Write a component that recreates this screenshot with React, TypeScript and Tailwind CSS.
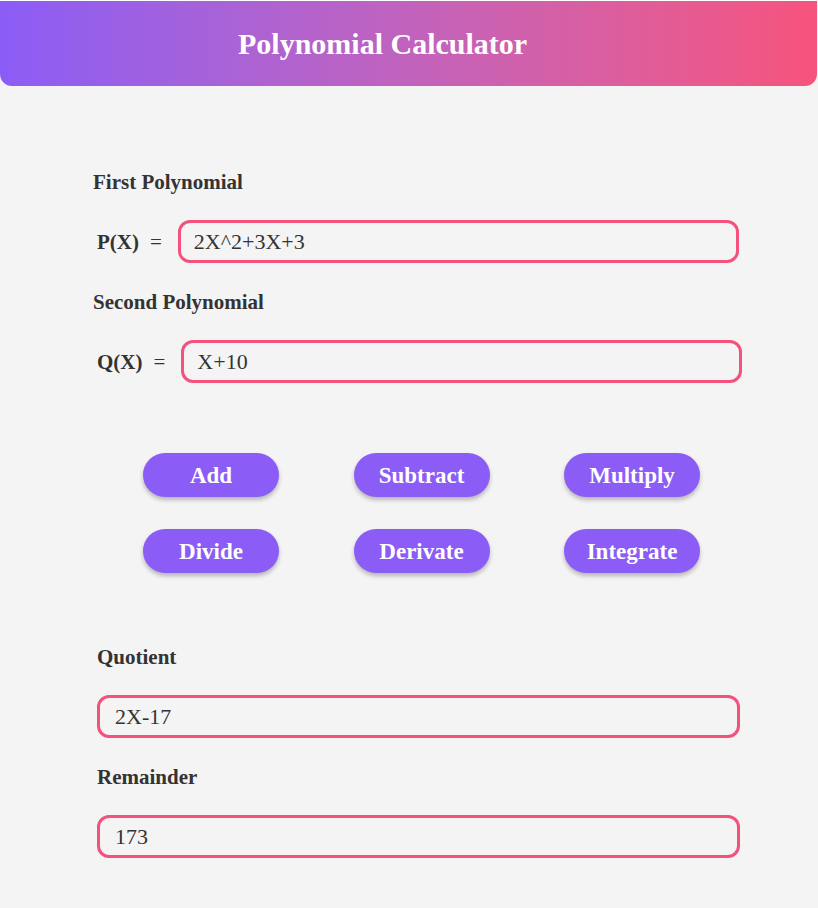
const serif = "font-['Liberation_Serif','Times_New_Roman',serif]";

function Field({ name, value, boxLeft }: { name: string; value: string; boxLeft: string }) {
  return (
    <div className="flex items-center">
      <span className="pl-[4px] text-[21px] font-bold leading-[24px] text-[#333]">{name}</span>
      <span className="ml-[11px] text-[21px] leading-[24px] text-[#333]">=</span>
      <div
        className={`${boxLeft} flex h-[43px] flex-1 items-center rounded-[12px] border-[3px] border-[#f5517d] pl-[13px] text-[22px] text-[#333]`}
      >
        {value}
      </div>
    </div>
  );
}

function Output({ value }: { value: string }) {
  return (
    <div className="flex h-[43px] items-center rounded-[12px] border-[3px] border-[#f5517d] pl-[15px] text-[22px] text-[#333]">
      {value}
    </div>
  );
}

const ops = ["Add", "Subtract", "Multiply", "Divide", "Derivate", "Integrate"];

export default function App() {
  return (
    <div className={`min-h-[908px] w-[818px] bg-[#f4f4f4] ${serif}`}>
      <header className="mt-px flex h-[85px] w-[817px] items-center rounded-b-[12px] bg-gradient-to-r from-[#8b5cf6] to-[#f7537c] pl-[238px]">
        <h1 className="text-[30px] font-bold text-white">Polynomial Calculator</h1>
      </header>

      <section className="pl-[93px] pr-[76px] pt-[84px]">
        <h2 className="text-[21px] font-bold leading-[24px] text-[#333]">First Polynomial</h2>
        <div className="mt-[26px] pr-[3px]">
          <Field name="P(X)" value="2X^2+3X+3" boxLeft="ml-[16px]" />
        </div>
        <h2 className="mt-[27px] text-[21px] font-bold leading-[24px] text-[#333]">Second Polynomial</h2>
        <div className="mt-[26px]">
          <Field name="Q(X)" value="X+10" boxLeft="ml-[16px]" />
        </div>
      </section>

      <div className="ml-[143px] mt-[70px] grid w-[557px] grid-cols-[136px_136px_136px] justify-between gap-y-[32px]">
        {ops.map((op) => (
          <button
            key={op}
            className="h-[44px] rounded-full bg-[#8b5cf6] text-[23px] font-bold leading-none text-white shadow-[0_3px_4px_rgba(0,0,0,0.25)]"
          >
            {op}
          </button>
        ))}
      </div>

      <section className="pl-[97px] pr-[78px] pt-[72px]">
        <h2 className="text-[21px] font-bold leading-[24px] text-[#333]">Quotient</h2>
        <div className="mt-[26px]">
          <Output value="2X-17" />
        </div>
        <h2 className="mt-[27px] text-[21px] font-bold leading-[24px] text-[#333]">Remainder</h2>
        <div className="mt-[26px]">
          <Output value="173" />
        </div>
      </section>
    </div>
  );
}
